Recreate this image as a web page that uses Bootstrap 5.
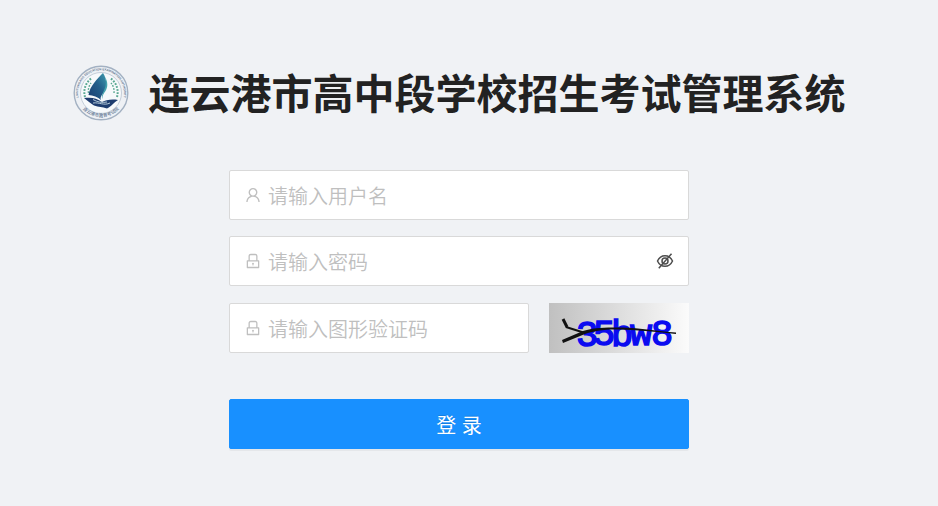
<!DOCTYPE html>
<html lang="zh-CN">
<head>
<meta charset="utf-8">
<meta name="viewport" content="width=device-width, initial-scale=1">
<title>连云港市高中段学校招生考试管理系统</title>
<link href="https://cdn.jsdelivr.net/npm/bootstrap@5.3.0/dist/css/bootstrap.min.css" rel="stylesheet">
<style>
body{background:#f0f2f5;font-family:"Liberation Sans","Noto Sans CJK SC",sans-serif;color:#222}
.login-page{padding:64px 20px 56px 0}
.brand{gap:20px;margin-bottom:48px}
.brand-logo{width:56px;height:56px}
.brand-title{font-size:41px;line-height:54px;padding-bottom:4px;font-weight:700;color:#222;font-family:"Noto Sans CJK SC",sans-serif}
.login-form{width:100%;max-width:460px}
.field{height:50px;background:#fff;border:1px solid #d9d9d9;border-radius:2px;padding:0 14px 0 15px}
.field:focus-within{border-color:#40a9ff}
.field-icon{width:16px;height:16px;color:#bfbfbf;margin-right:7px}
.field .form-control{font-size:20px;line-height:30px;font-weight:350;border-radius:0;color:#222;font-family:"Noto Sans CJK SC",sans-serif}
.field .form-control.form-control{padding:2px 0 0}
.field .form-control::placeholder{color:#bfbfbf;opacity:1}
.eye{color:#4d4d4d}
.code-row{gap:20px;margin-top:17px}
.captcha{width:140px;height:50px}
.login-btn{height:50px;margin-top:46px;padding:4px 0 0;border-radius:2px;background:#1890ff;border-color:#1890ff;font-size:20px;line-height:30px;box-shadow:0 2px 0 rgba(0,0,0,.045);text-shadow:0 -1px 0 rgba(0,0,0,.12)}
</style>
</head>
<body>
<main class="login-page d-flex flex-column align-items-center">
  <header class="brand d-flex align-items-center justify-content-center">
    <svg class="brand-logo flex-shrink-0" viewBox="0 0 56 56" role="img" aria-label="徽标">
      <defs>
        <linearGradient id="sail" x1="0" y1="1" x2="1" y2="0"><stop offset="0" stop-color="#1b3d70"/><stop offset=".55" stop-color="#245f8b"/><stop offset="1" stop-color="#3f9cae"/></linearGradient>
        <path id="arcTop" d="M8 39.500A23 23 0 1 1 48 39.500"/>
        <path id="arcBottom" d="M4 34A25 25 0 0 0 52 34"/>
      </defs>
      <circle cx="28" cy="28" r="26.800" fill="#eef1f5" stroke="#a3b1c2" stroke-width="1.400"/>
      <circle cx="28" cy="28" r="20.500" fill="#f6f9fb" stroke="#b9c4d1" stroke-width=".8"/>
      <text font-family="Liberation Sans" font-size="3" fill="#5f7590" font-weight="700"><textPath href="#arcTop" startOffset="50%" text-anchor="middle">LIANYUNGANG EDUCATION EXAMINATION AUTHORITY</textPath></text>
      <text font-family="Noto Sans CJK SC" font-size="4.500" font-weight="500" fill="#6a7e98"><textPath href="#arcBottom" startOffset="50%" text-anchor="middle">连云港市教育考试院</textPath></text>
      <g fill="none" stroke="#5aa892" stroke-width="2" stroke-dasharray="1.800 1.300">
        <path d="M12 32A17 17 0 0 1 19 13"/><path d="M44 32A17 17 0 0 0 37 13"/>
        <path d="M15.500 28A13 13 0 0 1 18 18" stroke-width="1.400"/><path d="M41 28A13 13 0 0 0 38 18" stroke-width="1.400"/>
      </g>
      <path d="M30 8C24 14 17 21 15.500 30C20 30.500 25 32 28 35C26 31 32 28 33 22C34 16 32 11 30 8Z" fill="url(#sail)"/>
      <path d="M32 12C35 17 35 22 32.500 26C30.500 29 29 31 29.500 34C27.500 30 31.500 26 32.500 21C33 18 33 15 32 12Z" fill="#44a2ad"/>
      <path d="M11 33C18 32 24 33 29 37C33 35 38 34 45 35C41 37 38 42 34 43.500C29 41.500 26 42.500 21 40.500C18 39 15 36 11 33Z" fill="#1d3c6e"/>
      <path d="M20 34.500C24 37 29 38 34 37M20 38C26 37 31 41 37 38" fill="none" stroke="#c4d9e4" stroke-width=".9"/>
    </svg>
    <h1 class="brand-title mb-0">连云港市高中段学校招生考试管理系统</h1>
  </header>

  <form class="login-form">
    <div class="field d-flex align-items-center mb-3">
      <svg class="field-icon flex-shrink-0" viewBox="64 64 896 896" fill="currentColor" aria-hidden="true"><path d="M858.500 763.600a374 374 0 0 0-80.600-119.500 375.630 375.630 0 0 0-119.500-80.600c-.4-.2-.8-.3-1.200-.5C719.500 518 760 444.700 760 362c0-137-111-248-248-248S264 225 264 362c0 82.700 40.500 156 102.800 201.100-.4.200-.8.300-1.200.5-44.800 18.900-85 46-119.500 80.600a375.630 375.630 0 0 0-80.600 119.500A371.700 371.700 0 0 0 136 901.800a8 8 0 0 0 8 8.200h60c4.400 0 7.900-3.500 8-7.800 2-77.200 33-149.500 87.800-204.300 56.700-56.700 132-87.900 212.200-87.900s155.500 31.200 212.200 87.900C779 752.700 810 825 812 902.200c.1 4.400 3.600 7.800 8 7.800h60a8 8 0 0 0 8-8.200c-1-47.800-10.900-94.300-29.500-138.200zM512 534c-45.900 0-89.100-17.900-121.600-50.400S340 407.900 340 362c0-45.900 17.900-89.100 50.400-121.600S466.100 190 512 190s89.100 17.900 121.600 50.400S684 316.100 684 362c0 45.900-17.900 89.100-50.400 121.600S557.900 534 512 534z"/></svg>
      <input class="form-control border-0 shadow-none bg-transparent" type="text" placeholder="请输入用户名" aria-label="用户名" autocomplete="username">
    </div>
    <div class="field d-flex align-items-center">
      <svg class="field-icon flex-shrink-0" viewBox="64 64 896 896" fill="currentColor" aria-hidden="true"><path d="M832 464h-68V240c0-70.700-57.300-128-128-128H388c-70.700 0-128 57.300-128 128v224h-68c-17.700 0-32 14.300-32 32v384c0 17.700 14.300 32 32 32h640c17.700 0 32-14.300 32-32V496c0-17.700-14.300-32-32-32zM332 240c0-30.900 25.100-56 56-56h248c30.900 0 56 25.100 56 56v224H332V240zm460 600H232V536h560v304zM484 701v53c0 4.400 3.600 8 8 8h40c4.400 0 8-3.600 8-8v-53a48.010 48.010 0 1 0-56 0z"/></svg>
      <input class="form-control border-0 shadow-none bg-transparent" type="password" placeholder="请输入密码" aria-label="密码" autocomplete="current-password">
      <button class="eye btn border-0 p-0 d-flex" type="button" aria-label="显示密码">
        <svg width="18" height="18" viewBox="0 0 18 18" fill="none" stroke="currentColor" stroke-width="1.500" aria-hidden="true"><path d="M1.500 9C3 5.700 5.500 3.700 9 3.700S15 5.700 16.500 9C15 12.300 12.500 14.300 9 14.300S3 12.300 1.500 9Z"/><circle cx="9" cy="9" r="3"/><path d="M2.800 16.200L15.500 1.800"/></svg>
      </button>
    </div>
    <div class="code-row d-flex">
      <div class="field d-flex align-items-center flex-grow-1">
        <svg class="field-icon flex-shrink-0" viewBox="64 64 896 896" fill="currentColor" aria-hidden="true"><path d="M832 464h-68V240c0-70.700-57.300-128-128-128H388c-70.700 0-128 57.300-128 128v224h-68c-17.700 0-32 14.300-32 32v384c0 17.700 14.300 32 32 32h640c17.700 0 32-14.300 32-32V496c0-17.700-14.300-32-32-32zM332 240c0-30.900 25.100-56 56-56h248c30.900 0 56 25.100 56 56v224H332V240zm460 600H232V536h560v304zM484 701v53c0 4.400 3.600 8 8 8h40c4.400 0 8-3.600 8-8v-53a48.010 48.010 0 1 0-56 0z"/></svg>
        <input class="form-control border-0 shadow-none bg-transparent" type="text" placeholder="请输入图形验证码" aria-label="图形验证码" autocomplete="off">
      </div>
      <svg class="captcha flex-shrink-0" viewBox="0 0 140 50" role="img" aria-label="图形验证码">
        <defs><linearGradient id="captchaBg"><stop offset="0" stop-color="#c0c0c0"/><stop offset="1" stop-color="#fbfbfb"/></linearGradient></defs>
        <rect width="140" height="50" fill="url(#captchaBg)"/>
        <text y="43 42 43 42 42" x="27 44 62 81 102" font-family="Liberation Mono, monospace" font-size="37" fill="#0b0bf0" stroke="#0b0bf0" stroke-width="1.500">35bw8</text>
        <path d="M14 16L18 24" fill="none" stroke="#111" stroke-width="3"/>
        <path d="M17 24L36 30" fill="none" stroke="#111" stroke-width="2"/>
        <path d="M13 37L34 28C43 25 55 24 72 24.500C92 25 109 28 127 29.500V31C108 29 91 27 72 26.500C56 26 44 28 36 31L14 40Z" fill="#111"/>
      </svg>
    </div>
    <button class="login-btn btn btn-primary w-100" type="submit">登 录</button>
  </form>
</main>
<script src="https://cdn.jsdelivr.net/npm/bootstrap@5.3.0/dist/js/bootstrap.bundle.min.js"></script>
</body>
</html>
